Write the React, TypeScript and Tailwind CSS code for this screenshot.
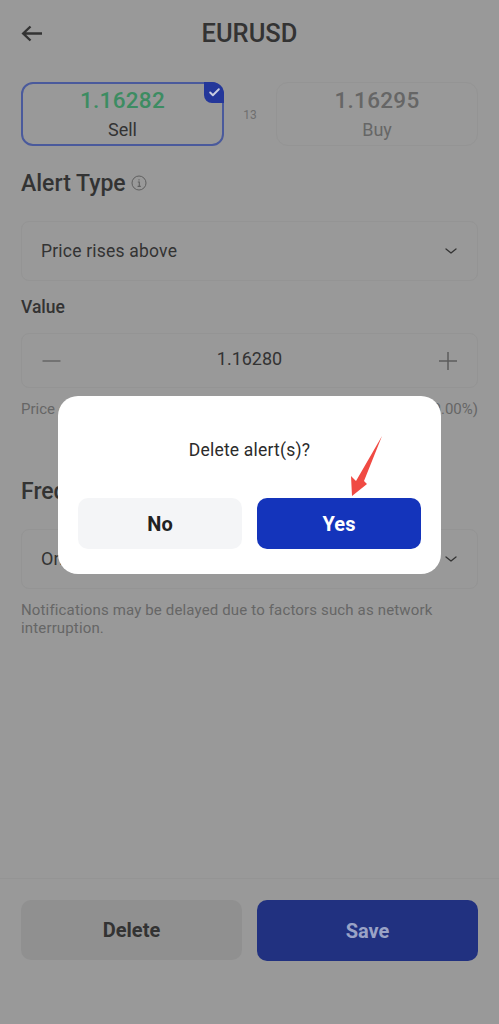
import { Check } from "lucide-react";

function Chevron() {
  return (
    <svg className="h-[8px] w-[14px]" viewBox="0 0 14 8" fill="none" stroke="currentColor" strokeWidth="1.3">
      <path d="M2 2 7 6l5-4" strokeLinecap="round" strokeLinejoin="round" />
    </svg>
  );
}

export default function App() {
  return (
    <div className="relative h-[1024px] w-[499px] overflow-hidden bg-[#999999] font-['Roboto',sans-serif] text-[#333333]">
      <div className="flex h-full flex-col">
        <header className="relative flex h-[66px] shrink-0 items-center justify-center">
          <svg className="absolute left-[20px] top-[21px] h-[24px] w-[24px]" viewBox="0 0 24 24" fill="none" stroke="currentColor" strokeWidth="2.4">
            <path d="M22 12.5H3M10.5 5.5 3.2 12.5l7.3 7" />
          </svg>
          <h1 className="pt-[1px] text-[25.5px] font-medium leading-none">EURUSD</h1>
        </header>

        <div className="mt-[16px] flex items-center px-[21px]">
          <div className="relative flex h-[64px] w-[203px] flex-col items-center justify-center rounded-[12px] border-2 border-[#4a5a9c]">
            <div className="pb-[2px] text-[22.5px] font-medium leading-[30px] tracking-[0.3px] text-[#3d8c62]">1.16282</div>
            <div className="text-[18px] leading-[26px]">Sell</div>
            <div className="absolute -right-[2px] -top-[2px] flex h-[21px] w-[20px] items-center justify-center rounded-bl-[8px] rounded-tr-[12px] bg-[#24379a]">
              <Check className="h-[13px] w-[13px] text-[#c9cde0]" strokeWidth={3.5} />
            </div>
          </div>
          <div className="flex-1 pt-[1px] text-center text-[12px] text-[#6f6f6f]">13</div>
          <div className="flex h-[64px] w-[202px] flex-col items-center justify-center rounded-[12px] border border-[#949494]">
            <div className="pb-[2px] text-[22.5px] font-medium leading-[30px] tracking-[0.3px] text-[#666666]">1.16295</div>
            <div className="text-[18px] leading-[26px] text-[#666666]">Buy</div>
          </div>
        </div>

        <div className="mt-[23px] flex h-[28px] items-center px-[21px]">
          <h2 className="text-[23px] font-medium leading-none">Alert Type</h2>
          <svg className="ml-[5px] h-[16px] w-[16px] text-[#5f5f5f]" viewBox="0 0 16 16" fill="none" stroke="currentColor">
            <circle cx="8" cy="8" r="7" strokeWidth="1" />
            <path d="M6.8 7h1.5v4.2M6.6 11.4h3.2M8 4.2v1.2" strokeWidth="1.1" />
          </svg>
        </div>

        <div className="mx-[21px] mt-[24px] flex h-[60px] items-center justify-between rounded-[8px] border border-[#949494] pl-[19px] pr-[19px]">
          <span className="pt-[1px] text-[17.5px] leading-none tracking-[0.2px]">Price rises above</span>
          <Chevron />
        </div>

        <div className="mt-[16px] px-[21px] text-[17.5px] font-medium leading-[20px]">Value</div>

        <div className="mx-[21px] mt-[16px] flex h-[55px] items-center justify-between rounded-[8px] border border-[#949494] pl-[19px] pr-[19px]">
          <svg className="h-[20px] w-[20px] text-[#666666]" viewBox="0 0 20 20" stroke="currentColor" strokeWidth="1.5">
            <path d="M1.5 10h18" />
          </svg>
          <span className="pb-[3px] text-[18px] leading-none">1.16280</span>
          <svg className="h-[20px] w-[20px] text-[#5c5c5c]" viewBox="0 0 20 20" stroke="currentColor" strokeWidth="1.5">
            <path d="M1 10h18M10 1v18" />
          </svg>
        </div>

        <div className="mt-[12px] flex justify-between px-[21px] text-[15px] leading-[18px] text-[#666666]">
          <span>Price difference</span>
          <span>-0.00002 (0.00%)</span>
        </div>

        <h2 className="mt-[60px] px-[21px] text-[23px] font-medium leading-[28px]">Frequency</h2>

        <div className="mx-[21px] mt-[23px] flex h-[60px] items-center justify-between rounded-[8px] border border-[#949494] pl-[19px] pr-[19px]">
          <span className="text-[18px] leading-none">Once</span>
          <Chevron />
        </div>

        <p className="mt-[12px] px-[21px] text-[15px] leading-[18px] tracking-[0.15px] text-[#666666]">
          Notifications may be delayed due to factors such as network interruption.
        </p>

        <div className="mt-auto flex h-[146px] shrink-0 gap-[15px] border-t border-[#949494] px-[21px] pt-[21px]">
          <button className="flex h-[60px] w-[221px] items-center justify-center rounded-[10px] bg-[#909090] text-[20px] font-bold text-[#333333]">
            Delete
          </button>
          <button className="flex h-[61px] w-[221px] items-center justify-center rounded-[10px] bg-[#213180] text-[20px] font-bold text-[#9aa3c6]">
            Save
          </button>
        </div>
      </div>

      <div className="absolute left-[58px] top-[396px] flex h-[178px] w-[383px] flex-col rounded-[20px] bg-white px-[20px] pt-[44px]">
        <p className="text-center text-[17.5px] leading-[20px] tracking-[0.2px] text-[#2b2b2b]">Delete alert(s)?</p>
        <div className="mt-[38px] flex gap-[15px]">
          <button className="flex h-[51px] w-[164px] items-center justify-center rounded-[10px] bg-[#f4f5f7] pt-[1px] text-[20px] font-bold text-[#222222]">
            No
          </button>
          <button className="flex h-[51px] w-[164px] items-center justify-center rounded-[10px] bg-[#1434bb] pt-[1px] text-[20px] font-bold text-white">
            Yes
          </button>
        </div>
      </div>

      <svg className="absolute left-[345px] top-[430px] h-[70px] w-[42px]" viewBox="345 430 42 70">
        <polygon points="382,436 364,481 367,484 352,496 351,476 356,481" fill="#f04a43" />
      </svg>
    </div>
  );
}
